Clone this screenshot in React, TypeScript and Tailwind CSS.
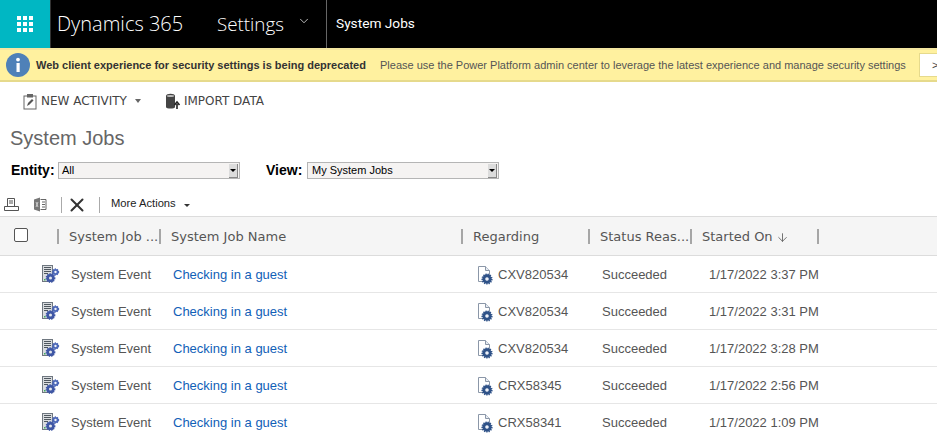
import { ArrowDown, ChevronDown, X } from 'lucide-react';

const rows = [
  { regarding: 'CXV820534', started: '1/17/2022 3:37 PM' },
  { regarding: 'CXV820534', started: '1/17/2022 3:31 PM' },
  { regarding: 'CXV820534', started: '1/17/2022 3:28 PM' },
  { regarding: 'CRX58345', started: '1/17/2022 2:56 PM' },
  { regarding: 'CRX58341', started: '1/17/2022 1:09 PM' },
];

const cols = 'grid grid-cols-[58px_102px_302px_127px_101px_128px_1fr]';

function Gear({ cx, cy, r, fill = '#4a63ad' }: { cx: number; cy: number; r: number; fill?: string }) {
  return (
    <g>
      <circle cx={cx} cy={cy} r={r} fill="none" stroke={fill} strokeWidth={r * 0.9} />
      <circle cx={cx} cy={cy} r={r * 1.45} fill="none" stroke={fill} strokeWidth={r * 0.6} strokeDasharray="1.2 1" />
      <circle cx={cx} cy={cy} r={r * 0.3} fill="#e6ebf7" />
    </g>
  );
}

function JobIcon() {
  return (
    <svg width="18" height="19" viewBox="0 0 18 19">
      <rect x="0.5" y="0.5" width="10" height="16" fill="#d9dcdf" stroke="#6f7780" />
      <path d="M2 2.500h7M2 4.500h7M2 6.500h7M2 8.500h4" stroke="#4f575f" strokeWidth="1" />
      <rect x="2" y="14" width="1.500" height="1.500" fill="#3fae5a" />
      <Gear cx={8.500} cy={13} r={2.800} fill="#3f57a6" />
      <Gear cx={13.500} cy={7} r={2.100} fill="#4d68b8" />
    </svg>
  );
}

function RecordIcon() {
  return (
    <svg width="17" height="19" viewBox="0 0 17 19">
      <path d="M0.500.500h7l4 4v11h-11z" fill="#fff" stroke="#8b97a8" />
      <path d="M7.500.500v4h4" fill="#e6ebf2" stroke="#8b97a8" />
      <Gear cx={9} cy={13} r={3.200} fill="#2f5288" />
    </svg>
  );
}

function HeaderCell({ label }: { label: string }) {
  return (
    <div className="relative flex items-center whitespace-nowrap pl-[11px]">
      <span className="absolute left-[-1px] top-[10px] h-[15px] w-[2px] bg-[#a6a6a6]" />
      {label}
    </div>
  );
}

export default function App() {
  return (
    <div className="h-[440px] w-[937px] overflow-hidden bg-white font-['Liberation_Sans',sans-serif]">
      <header className="flex h-[48px] bg-black text-white">
        <div className="grid w-[51px] place-items-center border-r border-[#333] bg-[#00b7c3]">
          <div className="grid grid-cols-3 gap-[2px]">
            {Array.from({ length: 9 }).map((_, i) => (
              <span key={i} className="h-[4px] w-[4px] bg-white" />
            ))}
          </div>
        </div>
        <div className="ml-[6px] flex w-[160px] items-center font-['Open_Sans',sans-serif] text-[20px] font-light">Dynamics 365</div>
        <div className="flex w-[109px] items-center font-['Open_Sans',sans-serif] text-[18.8px] font-light">
          Settings
          <ChevronDown className="ml-[13px] mb-[6px]" size={14} strokeWidth={1.25} />
        </div>
        <div className="flex items-center border-l border-[#666] pl-[9px] pb-[2px] font-['Roboto',sans-serif] text-[13.7px]">System Jobs</div>
      </header>

      <div className="flex h-[34px] items-center border-b-2 border-t-2 border-b-[#e6da8c] border-t-[#f3e6a0] bg-[#fff19f] pl-[6px]">
        <svg width="24" height="24" viewBox="0 0 24 24" className="shrink-0">
          <circle cx="12" cy="12" r="12" fill="#4f81b8" />
          <rect x="10.500" y="10" width="3.200" height="9" fill="#fff" />
          <circle cx="12" cy="6.600" r="1.900" fill="#fff" />
        </svg>
        <span className="ml-[6px] w-[344px] shrink-0 whitespace-nowrap text-[11px] font-bold text-[#333]">
          Web client experience for security settings is being deprecated
        </span>
        <span className="w-[525px] shrink-0 whitespace-nowrap text-[11px] text-[#555]">
          Please use the Power Platform admin center to leverage the latest experience and manage security settings
        </span>
        <div className="ml-[14px] flex h-[24px] w-[18px] shrink-0 items-center border border-r-0 border-[#e6da8c] bg-white pl-[12px] text-[11px] text-[#444]">
          &gt;
        </div>
      </div>

      <div className="flex h-[38px] items-center pl-[23px] font-['DejaVu_Sans',sans-serif] text-[12px] text-[#444]">
        <svg width="14" height="17" viewBox="0 0 14 17" className="mr-[4px]">
          <rect x="1" y="3" width="12" height="13" fill="#fff" stroke="#666" />
          <rect x="4" y="1" width="6" height="3.500" fill="#666" />
          <path d="M4 13l1-3 4-4 1.500 1.500-4 4z" fill="#555" />
        </svg>
        NEW ACTIVITY
        <span className="ml-[8px] mr-[24px] h-0 w-0 border-x-[3.5px] border-t-[4px] border-x-transparent border-t-[#666]" />
        <svg width="18" height="17" viewBox="0 0 18 17" className="mr-[1px]">
          <path d="M1 3c0-3 9-3 9 0v11c0 2-9 2-9 0z" fill="#444" />
          <ellipse cx="5.500" cy="3" rx="3.600" ry="1.100" fill="#bbb" />
          <path d="M12 16v-5M9.500 12l2.500-3 2.500 3" fill="none" stroke="#222" strokeWidth="1.600" />
        </svg>
        IMPORT DATA
      </div>

      <h1 className="h-[39px] pl-[10px] pt-[3px] text-[20px] leading-[30px] text-[#666]">System Jobs</h1>

      <div className="flex h-[23px] items-center pl-[11px]">
        <span className="w-[47px] text-[14px] font-bold text-black">Entity:</span>
        <div className="flex h-[17px] w-[182px] items-center justify-between border border-[#b5b5b5] bg-[#f5f3f2] pl-[3px] text-[11px] text-black">
          All
          <span className="mr-[1px] grid h-[14px] w-[9px] place-items-center border-b border-r border-[#888] bg-[#dcdcdc]">
            <span className="h-0 w-0 border-x-[3px] border-t-[3px] border-x-transparent border-t-black" />
          </span>
        </div>
        <span className="ml-[26px] w-[41px] text-[14px] font-bold text-black">View:</span>
        <div className="flex h-[17px] w-[192px] items-center justify-between border border-[#b5b5b5] bg-[#f5f3f2] pl-[4px] text-[11px] text-black">
          My System Jobs
          <span className="mr-[1px] grid h-[14px] w-[9px] place-items-center border-b border-r border-[#888] bg-[#dcdcdc]">
            <span className="h-0 w-0 border-x-[3px] border-t-[3px] border-x-transparent border-t-black" />
          </span>
        </div>
      </div>

      <div className="flex h-[34px] items-center pl-[4px] pt-[11px]">
        <svg width="15" height="15" viewBox="0 0 15 15">
          <path d="M3.500 1.500h7v8h-7zM5 4h4M5 6h4" fill="none" stroke="#555" />
          <path d="M.5 9.500h14v4H.5z" fill="#fff" stroke="#555" />
        </svg>
        <svg width="14" height="15" viewBox="0 0 14 15" className="ml-[14px]">
          <path d="M1 2.500l6-2v14l-6-2z" fill="#777" />
          <path d="M3 5l2 5M5 5l-2 5" stroke="#ddd" strokeWidth="0.800" />
          <path d="M7.500 2.500H13v10H7.500" fill="none" stroke="#666" />
          <path d="M9 5h3M9 7.500h3M9 10h3" stroke="#666" />
        </svg>
        <span className="ml-[14px] h-[16px] w-px bg-[#aaa]" />
        <X className="ml-[4px]" size={22} strokeWidth={2.200} color="#333" />
        <span className="ml-[11px] h-[16px] w-px bg-[#aaa]" />
        <span className="mb-[2px] ml-[11px] text-[11.2px] text-[#222]">More Actions</span>
        <span className="ml-[8px] mt-[2px] h-0 w-0 border-x-[3px] border-t-[3px] border-x-transparent border-t-[#333]" />
      </div>

      <div className={`${cols} h-[40px] border-y border-y-[#dcdcdc] bg-[#f5f5f5] pt-[2px] font-['DejaVu_Sans',sans-serif] text-[13px] text-[#555]`}>
        <div className="flex items-center pb-[4px] pl-[14px]">
          <span className="h-[14px] w-[14px] rounded-[2px] border border-[#555] bg-white" />
        </div>
        <HeaderCell label="System Job ..." />
        <HeaderCell label="System Job Name" />
        <HeaderCell label="Regarding" />
        <HeaderCell label="Status Reas..." />
        <div className="relative flex items-center whitespace-nowrap pl-[12px]">
          <span className="absolute left-0 top-[10px] h-[15px] w-[2px] bg-[#a6a6a6]" />
          Started On
          <ArrowDown className="ml-[3px]" size={13} strokeWidth={1.5} />
        </div>
        <div className="relative">
          <span className="absolute left-[-1px] top-[10px] h-[15px] w-[2px] bg-[#a6a6a6]" />
        </div>
      </div>

      {rows.map((row, i) => (
        <div key={i} className={`${cols} h-[37px] items-center border-b border-[#e6e6e6] pt-[2px] text-[13px] text-[#555]`}>
          <div className="flex justify-end pb-[1px]">
            <div className="mr-[-2px]">
              <JobIcon />
            </div>
          </div>
          <div className="pl-[13px]">System Event</div>
          <div className="pl-[13px] text-[#1160b7]">Checking in a guest</div>
          <div className="flex items-center pl-[16px]">
            <RecordIcon />
            <span className="ml-[3px]">{row.regarding}</span>
          </div>
          <div className="pl-[13px]">Succeeded</div>
          <div className="col-span-2 pl-[19px]">{row.started}</div>
        </div>
      ))}
    </div>
  );
}
